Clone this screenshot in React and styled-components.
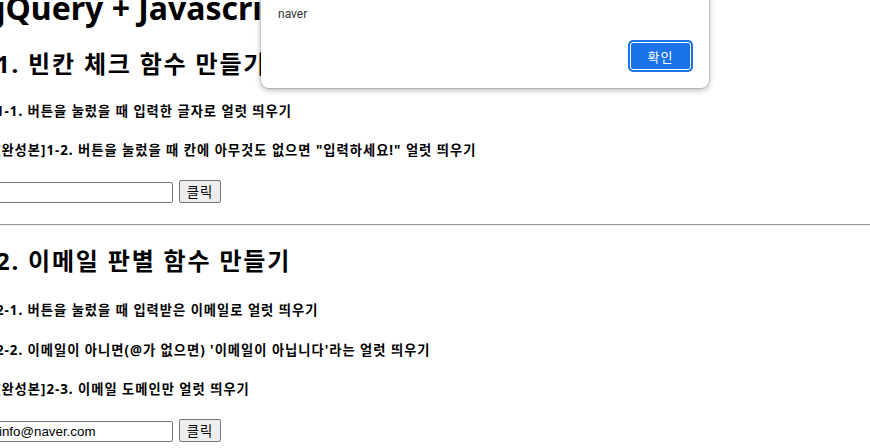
import React from "react";
import styled, {createGlobalStyle} from "styled-components";

const GlobalStyle = createGlobalStyle`
  html, body {
    margin: 0;
    padding: 0;
    background: #ffffff;
    overflow: hidden;
  }
  body {
    font-family: "Noto Sans", "Noto Sans CJK KR", sans-serif;
    color: #000000;
  }
`;

const Page = styled.div`
  margin: -12px 0 0 -4px;
  display: flex;
  flex-direction: column;
`;

const Title = styled.h1`
  margin: 0;
  font-size: 32px;
  line-height: 40px;
  font-weight: 700;
  white-space: nowrap;
`;

const SectionTitle = styled.h2`
  margin: ${props => props.$top}px 0 0;
  font-size: 24px;
  line-height: 30px;
  font-weight: 700;
  letter-spacing: 1.8px;
  white-space: nowrap;
`;

const Task = styled.h5`
  margin: ${props => props.$top || 22}px 0 0;
  font-size: 13.28px;
  line-height: 18px;
  font-weight: 700;
  letter-spacing: 1px;
  white-space: nowrap;
`;

const InputRow = styled.div`
  margin-top: 21px;
  display: flex;
  align-items: flex-end;
  gap: 6px;
`;

const TextInput = styled.input`
  box-sizing: border-box;
  width: 177px;
  height: 21px;
  margin: 0;
  padding: 1px 2px;
  border: 1px solid #767676;
  border-radius: 2px;
  font-family: "Liberation Sans", Arial, sans-serif;
  font-size: 13.33px;
  color: #000000;
  background: #ffffff;
  outline: none;
`;

const Button = styled.button`
  box-sizing: border-box;
  width: 42px;
  height: 23px;
  margin: 0;
  padding: 0;
  border: 1px solid #767676;
  border-radius: 2px;
  background: #efefef;
  font-family: "Noto Sans CJK KR", sans-serif;
  font-size: 13.33px;
  line-height: 20px;
  letter-spacing: 1px;
  color: #000000;
`;

const Rule = styled.hr`
  margin: 21px 0 0;
  height: 0;
  border: none;
  border-top: 1px solid #9a9a9a;
  border-bottom: 1px solid #eeeeee;
`;

const Dialog = styled.div`
  position: absolute;
  left: 261px;
  top: -20px;
  width: 448px;
  height: 108px;
  box-sizing: border-box;
  padding: 27px 16px 16px 17px;
  background: #ffffff;
  border-radius: 0 0 8px 8px;
  box-shadow: 0 0 0 1px rgba(0, 0, 0, 0.12), 0 2px 6px rgba(0, 0, 0, 0.3);
  display: flex;
  flex-direction: column;
  justify-content: space-between;
  font-family: Roboto, "Noto Sans", sans-serif;
`;

const Message = styled.div`
  font-size: 12px;
  line-height: 14px;
  color: #303030;
`;

const DialogActions = styled.div`
  display: flex;
  justify-content: flex-end;
`;

const ConfirmButton = styled.button`
  box-sizing: border-box;
  width: 65px;
  height: 32px;
  border: 2px solid #1a73e8;
  border-radius: 5px;
  background: #1a73e8;
  box-shadow: inset 0 0 0 1px #ffffff;
  color: #ffffff;
  font-family: "Noto Sans CJK KR", sans-serif;
  font-size: 13px;
  letter-spacing: 1px;
  padding: 0;
`;

export default function App() {
    return (
        <>
            <GlobalStyle/>
            <Page>
                <Title>jQuery + Javascript</Title>
                <SectionTitle $top={21}>1. 빈칸 체크 함수 만들기</SectionTitle>
                <Task $top={23}>1-1. 버튼을 눌렀을 때 입력한 글자로 얼럿 띄우기</Task>
                <Task $top={21}>[완성본]1-2. 버튼을 눌렀을 때 칸에 아무것도 없으면 "입력하세요!" 얼럿 띄우기</Task>
                <InputRow>
                    <TextInput type="text" defaultValue=""/>
                    <Button>클릭</Button>
                </InputRow>
                <Rule/>
                <SectionTitle $top={20}>2. 이메일 판별 함수 만들기</SectionTitle>
                <Task $top={25}>2-1. 버튼을 눌렀을 때 입력받은 이메일로 얼럿 띄우기</Task>
                <Task $top={22}>2-2. 이메일이 아니면(@가 없으면) '이메일이 아닙니다'라는 얼럿 띄우기</Task>
                <Task $top={21}>[완성본]2-3. 이메일 도메인만 얼럿 띄우기</Task>
                <InputRow>
                    <TextInput type="text" defaultValue="info@naver.com"/>
                    <Button>클릭</Button>
                </InputRow>
            </Page>
            <Dialog>
                <Message>naver</Message>
                <DialogActions>
                    <ConfirmButton>확인</ConfirmButton>
                </DialogActions>
            </Dialog>
        </>
    );
}
